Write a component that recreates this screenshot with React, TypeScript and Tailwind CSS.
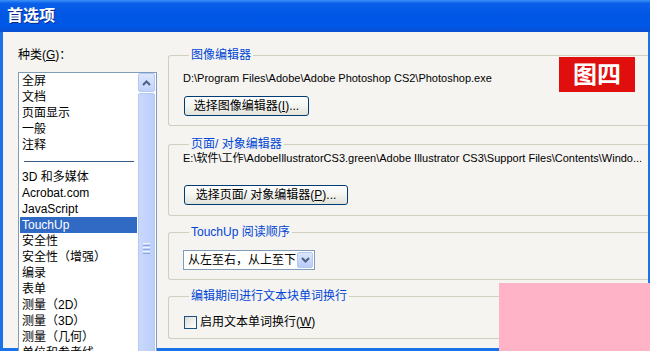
import React from "react";

const F = "font-['Liberation_Sans','Noto_Sans_CJK_SC',sans-serif]";

function Group({
  label,
  className,
  children,
}: {
  label: string;
  className: string;
  children: React.ReactNode;
}) {
  return (
    <fieldset
      className={`border-l border-t border-b border-[#d0d0bf] rounded-l-[3px] pl-[14px] ${className}`}
    >
      <legend className="ml-[6px] px-[2px] text-[12px] leading-[14px] text-[#0046d5]">
        {label}
      </legend>
      {children}
    </fieldset>
  );
}

function XPButton({ children, w }: { children: React.ReactNode; w: string }) {
  return (
    <div
      className={`${w} h-[20px] flex items-center justify-center rounded-[3px] border border-[#003c74] bg-[linear-gradient(to_bottom,#ffffff_0%,#f4f4f0_50%,#e3e3db_100%)] text-[12px] leading-[14px] text-black`}
    >
      {children}
    </div>
  );
}

const items: { t: string; sel?: boolean; sep?: boolean }[] = [
  { t: "全屏" },
  { t: "文档" },
  { t: "页面显示" },
  { t: "一般" },
  { t: "注释" },
  { t: "", sep: true },
  { t: "3D 和多媒体" },
  { t: "Acrobat.com" },
  { t: "JavaScript" },
  { t: "TouchUp", sel: true },
  { t: "安全性" },
  { t: "安全性（增强）" },
  { t: "编录" },
  { t: "表单" },
  { t: "测量（2D）" },
  { t: "测量（3D）" },
  { t: "测量（几何）" },
  { t: "单位和参考线" },
];

export default function App() {
  return (
    <div className={`relative w-[650px] h-[351px] overflow-hidden bg-[#f5f4f1] ${F}`}>
      {/* title bar */}
      <div className="h-[32px] flex items-center pl-[7px] bg-[linear-gradient(to_bottom,#3d93f7_0%,#0b60ea_10%,#0056e5_45%,#0058e8_80%,#0a4fd2_100%)]">
        <span className="text-white text-[16px] font-bold leading-[18px] [text-shadow:1px_1px_0_#0a2a8a]">
          首选项
        </span>
      </div>

      {/* body */}
      <div className="flex h-[319px] border-l-[3px] border-r-[2px] border-b-[3px] border-[#1a72ea]">
        {/* left column */}
        <div className="w-[157px] shrink-0 pl-[15px]">
          <div className="mt-[16px] h-[14px] text-[12px] leading-[14px] text-black">
            种类(<span className="underline">G</span>)：
          </div>
          <div className="mt-[10px] w-[139px] h-[300px] border border-[#7f9db9] bg-white flex">
            <div className="w-[119px] px-[1px] pt-0">
              {items.map((it, i) =>
                it.sep ? (
                  <div key={i} className="h-[16px] flex items-center pl-[4px] pr-[3px]">
                    <div className="h-px w-full bg-[#3b5b8c]" />
                  </div>
                ) : (
                  <div
                    key={i}
                    className={`h-[16px] pl-[2px] text-[12px] leading-[16px] whitespace-nowrap ${
                      it.sel ? "bg-[#316ac5] text-white" : "text-black"
                    }`}
                  >
                    {it.t}
                  </div>
                )
              )}
            </div>
            <div className="w-[17px] flex flex-col">
              <div className="h-[19px] rounded-[2px] border border-[#b3c8f5] bg-[linear-gradient(to_bottom,#dce6fd,#c1d3fb)] flex items-center justify-center">
                <svg width="9" height="6" viewBox="0 0 9 6">
                  <path d="M1 5 L4.5 1.5 L8 5" fill="none" stroke="#4d6185" strokeWidth="2" />
                </svg>
              </div>
              <div className="flex-1 mt-px rounded-[2px] border border-[#b3c8f5] bg-[linear-gradient(to_right,#c9d8fc,#bccffa)] flex flex-col items-center pt-[149px] gap-[1px]">
                <div className="w-[7px] h-px bg-[#eef3fe]" />
                <div className="w-[7px] h-px bg-[#8aa6e6]" />
                <div className="w-[7px] h-px bg-[#eef3fe]" />
                <div className="w-[7px] h-px bg-[#8aa6e6]" />
                <div className="w-[7px] h-px bg-[#eef3fe]" />
                <div className="w-[7px] h-px bg-[#8aa6e6]" />
              </div>
            </div>
          </div>
        </div>

        {/* right column */}
        <div className="flex-1 pl-[8px] flex flex-col">
          <Group label="图像编辑器" className="mt-[16px] h-[78px]">
            <div className="mt-[9px] h-[14px] text-[11px] leading-[14px] text-black whitespace-nowrap">
              D:\Program Files\Adobe\Adobe Photoshop CS2\Photoshop.exe
            </div>
            <div className="mt-[11px] ml-px">
              <XPButton w="w-[125px]">
                选择图像编辑器(<span className="underline">I</span>)...
              </XPButton>
            </div>
          </Group>

          <Group label="页面/ 对象编辑器" className="mt-[11px] h-[79px]">
            <div className="mt-0 h-[14px] text-[11px] leading-[14px] text-black whitespace-nowrap">
              E:\软件\工作\AdobeIllustratorCS3.green\Adobe Illustrator CS3\Support Files\Contents\Windo...
            </div>
            <div className="mt-[20px] ml-px">
              <XPButton w="w-[164px]">
                选择页面/ 对象编辑器(<span className="underline">P</span>)...
              </XPButton>
            </div>
          </Group>

          <Group label="TouchUp 阅读顺序" className="mt-[9px] h-[55px]">
            <div className="mt-[11px] w-[132px] h-[20px] border border-[#7f9db9] bg-white flex items-center">
              <span className="flex-1 pl-[4px] text-[12px] leading-[14px] text-black whitespace-nowrap overflow-hidden">
                从左至右，从上至下
              </span>
              <div className="w-[16px] h-[16px] mr-px rounded-[2px] border border-[#b3c8f5] bg-[linear-gradient(to_bottom,#dce6fd,#b7cbf9)] flex items-center justify-center">
                <svg width="9" height="6" viewBox="0 0 9 6">
                  <path d="M1 1 L4.5 4.5 L8 1" fill="none" stroke="#4d6185" strokeWidth="2" />
                </svg>
              </div>
            </div>
          </Group>

          <Group label="编辑期间进行文本块单词换行" className="mt-[9px] h-[50px]">
            <div className="mt-[12px] flex items-center h-[14px] ml-px">
              <div className="w-[13px] h-[13px] border border-[#1c5180] bg-[linear-gradient(135deg,#dcdcd7,#ffffff)]" />
              <span className="ml-[3px] text-[12px] leading-[14px] text-black">
                启用文本单词换行(<span className="underline">W</span>)
              </span>
            </div>
          </Group>
        </div>
      </div>

      {/* overlays */}
      <div className="absolute left-[559px] top-[57px] w-[76px] h-[35px] bg-[#e10e0e] flex items-center justify-center">
        <span className="text-white text-[24px] font-bold leading-[26px]">图四</span>
      </div>
      <div className="absolute left-[499px] top-[283px] w-[151px] h-[68px] bg-[#ffb3c7]" />
    </div>
  );
}
